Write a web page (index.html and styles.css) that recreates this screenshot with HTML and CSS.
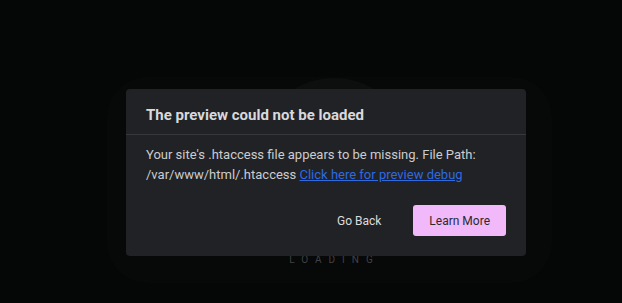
FILE: index.html
```html
<!DOCTYPE html>
<html lang="en">

<head>
    <meta charset="UTF-8">
    <title>Preview</title>
    <link rel="stylesheet" href="styles.css">
</head>

<body>
    <div class="loader">
        <div class="spinner"></div>
        <div class="loading-text">LOADING</div>
    </div>

    <div class="modal">
        <div class="modal-header">The preview could not be loaded</div>
        <div class="modal-body">
            Your site's .htaccess file appears to be missing. File Path:<br>
            /var/www/html/.htaccess <a href="#">Click here for preview debug</a>
        </div>
        <div class="modal-footer">
            <button class="btn btn-text">Go Back</button>
            <button class="btn btn-primary">Learn More</button>
        </div>
    </div>
</body>
</html>
```

FILE: styles.css
```css
body {
    margin: 0;
    height: 303px;
    background-color: #050606;
    font-family: Roboto, "Liberation Sans", sans-serif;
    padding: 77px 0 0 107px;
    box-sizing: border-box;
    overflow: hidden;
}

.loader {
    width: 445px;
    height: 206px;
    background-color: #070808;
    border-radius: 40px;
    display: flex;
    flex-direction: column;
    align-items: center;
    padding-top: 1px;
    box-sizing: border-box;
}

.spinner {
    width: 156px;
    height: 156px;
    border-radius: 50%;
    background-color: #0d0e0e;
    margin-left: 8px;
}

.loading-text {
    margin-top: 20px;
    margin-left: 10px;
    font-size: 10px;
    letter-spacing: 7px;
    color: #404246;
}

.modal {
    position: absolute;
    left: 126px;
    top: 89px;
    width: 400px;
    background-color: #212226;
    border-radius: 4px;
}

.modal-header {
    padding: 17px 20px 0;
    height: 46px;
    box-sizing: border-box;
    border-bottom: 1px solid #36383c;
    font-size: 15px;
    font-weight: 700;
    color: #d8d9db;
}

.modal-body {
    padding: 10px 20px 0;
    font-size: 13px;
    line-height: 20px;
    color: #cbccce;
}

.modal-body a {
    color: #2f6ae0;
}

.modal-footer {
    display: flex;
    justify-content: flex-end;
    gap: 16px;
    padding: 20px 20px 20px;
}

.btn {
    height: 31px;
    padding: 0 16px;
    font-family: Roboto, "Liberation Sans", sans-serif;
    font-size: 12px;
    border: none;
    border-radius: 3px;
    cursor: pointer;
}

.btn-text {
    background: none;
    color: #dcdcde;
}

.btn-primary {
    background-color: #f1b9f9;
    color: #2a2a2e;
}
```
